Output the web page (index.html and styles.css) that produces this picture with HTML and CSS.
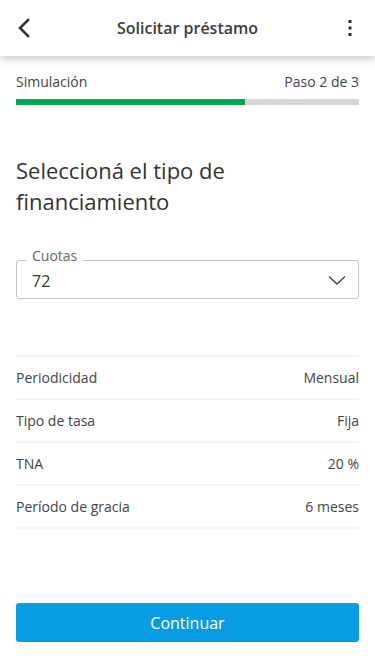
FILE: index.html
```html
<!DOCTYPE html>
<html lang="es">

<head>
    <meta charset="UTF-8">
    <meta name="viewport" content="width=device-width, initial-scale=1.0">
    <title>Solicitar préstamo</title>
    <link rel="stylesheet" href="styles.css">
</head>

<body>
    <header class="topbar">
        <button class="icon-btn back" aria-label="Volver">
            <svg width="14" height="20" viewBox="0 0 14 20">
                <path d="M11 2 L3 10 L11 18" fill="none" stroke="#333" stroke-width="2.6" stroke-linecap="square" />
            </svg>
        </button>
        <h1 class="title">Solicitar préstamo</h1>
        <button class="icon-btn more" aria-label="Más opciones">
            <svg width="4" height="18" viewBox="0 0 4 18">
                <rect x="0.5" y="1" width="3" height="3" fill="#333" />
                <rect x="0.5" y="7.5" width="3" height="3" fill="#333" />
                <rect x="0.5" y="14" width="3" height="3" fill="#333" />
            </svg>
        </button>
    </header>

    <main class="content">
        <div class="steps">
            <div class="steps-text">
                <span>Simulación</span>
                <span>Paso 2 de 3</span>
            </div>
            <div class="progress">
                <div class="progress-fill" style="width: 66.7%"></div>
            </div>
        </div>

        <h2 class="heading">Seleccioná el tipo de financiamiento</h2>

        <div class="field">
            <span class="field-label">Cuotas</span>
            <div class="field-box">
                <span class="field-value">72</span>
                <svg width="18" height="11" viewBox="0 0 18 11">
                    <path d="M1 1.5 L9 9 L17 1.5" fill="none" stroke="#444" stroke-width="1.4" />
                </svg>
            </div>
        </div>

        <ul class="details">
            <li><span>Periodicidad</span><span>Mensual</span></li>
            <li><span>Tipo de tasa</span><span>Fija</span></li>
            <li><span>TNA</span><span>20 %</span></li>
            <li><span>Período de gracia</span><span>6 meses</span></li>
        </ul>

        <button class="primary">Continuar</button>
    </main>
</body>

</html>
```

FILE: styles.css
```css
* {
    box-sizing: border-box;
}

body {
    margin: 0;
    background: #fff;
    font-family: "Open Sans", "Noto Sans", sans-serif;
    color: #333;
}

.topbar {
    height: 56px;
    display: flex;
    align-items: center;
    justify-content: space-between;
    padding: 0 12px;
    background: #fff;
    box-shadow: 0 3px 8px rgba(0, 0, 0, 0.22);
    position: relative;
}

.icon-btn {
    border: 0;
    background: none;
    padding: 0;
    width: 26px;
    height: 32px;
    display: flex;
    align-items: center;
    justify-content: center;
}

.back {
    justify-content: flex-start;
    padding-left: 5px;
}

.title {
    margin: 0;
    font-size: 16px;
    font-weight: 600;
    color: #3c3c3c;
}

.content {
    padding: 16px 16px 0;
}

.steps-text {
    display: flex;
    justify-content: space-between;
    font-size: 14px;
    color: #444;
    line-height: 20px;
}

.progress {
    margin-top: 7px;
    height: 6px;
    background: #d6d6d6;
}

.progress-fill {
    height: 100%;
    background: #00a650;
}

.heading {
    margin: 50px 0 0;
    font-size: 22px;
    font-weight: 400;
    line-height: 31px;
    color: #333;
    padding-right: 100px;
}

.field {
    margin-top: 43px;
    position: relative;
}

.field-label {
    position: absolute;
    left: 10px;
    top: -12px;
    padding: 0 6px;
    background: #fff;
    font-size: 14px;
    color: #666;
    line-height: 16px;
}

.field-box {
    height: 39px;
    border: 1px solid #c4c4c4;
    border-radius: 3px;
    display: flex;
    align-items: center;
    justify-content: space-between;
    padding: 2px 12px 0 15px;
}

.field-value {
    font-size: 16px;
    color: #333;
}

.details {
    list-style: none;
    margin: 56px 0 0;
    padding: 0;
    border-top: 2px solid #f4f4f4;
}

.details li {
    height: 43px;
    display: flex;
    justify-content: space-between;
    align-items: center;
    border-bottom: 2px solid #f4f4f4;
    font-size: 14px;
    color: #444;
}

.primary {
    display: block;
    width: 100%;
    height: 39px;
    margin-top: 74px;
    border: 0;
    border-radius: 3px;
    background: #069de5;
    color: #fff;
    font-family: inherit;
    font-size: 16px;
}
```
